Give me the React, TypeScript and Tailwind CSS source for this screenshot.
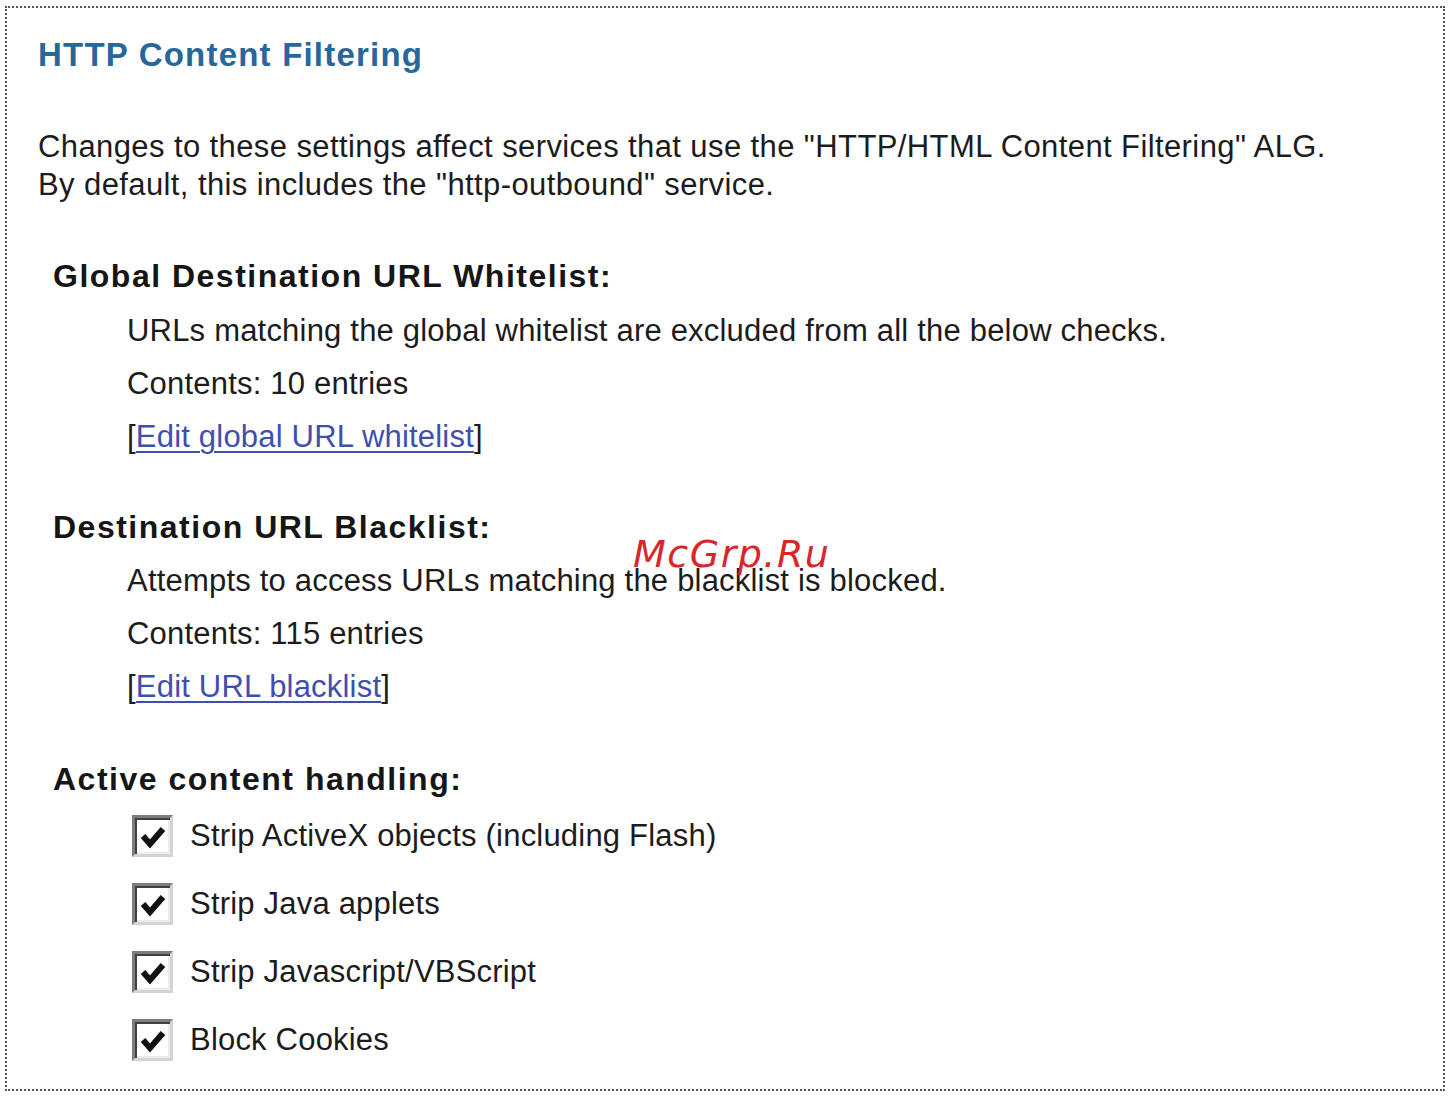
import React from 'react';

const font = "font-['Liberation_Sans',Arial,sans-serif]";

const CheckBox: React.FC = () => (
  <span className="relative inline-flex h-[42px] w-[41px] shrink-0 items-center justify-center border-[3px] border-t-[#7d7d7d] border-l-[#7d7d7d] border-b-[#d4d4d4] border-r-[#d4d4d4] bg-white shadow-[inset_2px_2px_0_#404040,inset_-2px_-2px_0_#ececec]">
    <svg width="26" height="24" viewBox="0 0 26 24" className="mt-[2px]">
      <path d="M3 11 L10 19 L23 4" fill="none" stroke="#111" strokeWidth="6" strokeLinejoin="miter" />
    </svg>
  </span>
);

const Check: React.FC<{ label: string }> = ({ label }) => (
  <div className="flex h-[68px] items-center pl-[94px]">
    <CheckBox />
    <span className="ml-[17px] text-[31px] tracking-[0.2px] text-[#1c1c1c]">{label}</span>
  </div>
);

const Line: React.FC<{ children: React.ReactNode }> = ({ children }) => (
  <div className="h-[53px] pl-[89px] text-[31px] leading-[53px] tracking-[0.2px] text-[#1c1c1c]">{children}</div>
);

const LinkLine: React.FC<{ text: string }> = ({ text }) => (
  <Line>
    [<a href="#" className="text-[#3f4fae] underline decoration-2 underline-offset-4">{text}</a>]
  </Line>
);

const Heading: React.FC<{ text: string; mt: string }> = ({ text, mt }) => (
  <h2 className={`h-[40px] pl-[15px] text-[32px] font-bold leading-[40px] tracking-[1.5px] text-[#161616] ${mt}`}>{text}</h2>
);

export default function App() {
  return (
    <div className={`min-h-screen bg-white pl-[5px] pt-[6px] ${font}`}>
      <div className="relative h-[1085px] w-[1440px] border-2 border-dotted border-[#555] pl-[31px] pt-[27px]">
        <h1 className="h-[40px] text-[33px] font-bold leading-[40px] tracking-[1.2px] text-[#27679a]">HTTP Content Filtering</h1>

        <div className="mt-[53px] text-[31px] leading-[38px] tracking-[0.4px] text-[#1c1c1c]">
          <p>Changes to these settings affect services that use the "HTTP/HTML Content Filtering" ALG.</p>
          <p>By default, this includes the "http-outbound" service.</p>
        </div>

        <Heading text="Global Destination URL Whitelist:" mt="mt-[52px]" />
        <div className="mt-[8px]">
          <Line>URLs matching the global whitelist are excluded from all the below checks.</Line>
          <Line>Contents: 10 entries</Line>
          <LinkLine text="Edit global URL whitelist" />
        </div>

        <Heading text="Destination URL Blacklist:" mt="mt-[44px]" />
        <div className="mt-[7px]">
          <Line>Attempts to access URLs matching the blacklist is blocked.</Line>
          <Line>Contents: 115 entries</Line>
          <LinkLine text="Edit URL blacklist" />
        </div>

        <Heading text="Active content handling:" mt="mt-[46px]" />
        <div className="mt-[3px]">
          <Check label="Strip ActiveX objects (including Flash)" />
          <Check label="Strip Java applets" />
          <Check label="Strip Javascript/VBScript" />
          <Check label="Block Cookies" />
        </div>

        <span className="absolute left-[626px] top-[524px] text-[38px] italic leading-[44px] tracking-[1.5px] text-[#d9262b] font-['DejaVu_Sans',sans-serif]">McGrp.Ru</span>
      </div>
    </div>
  );
}
